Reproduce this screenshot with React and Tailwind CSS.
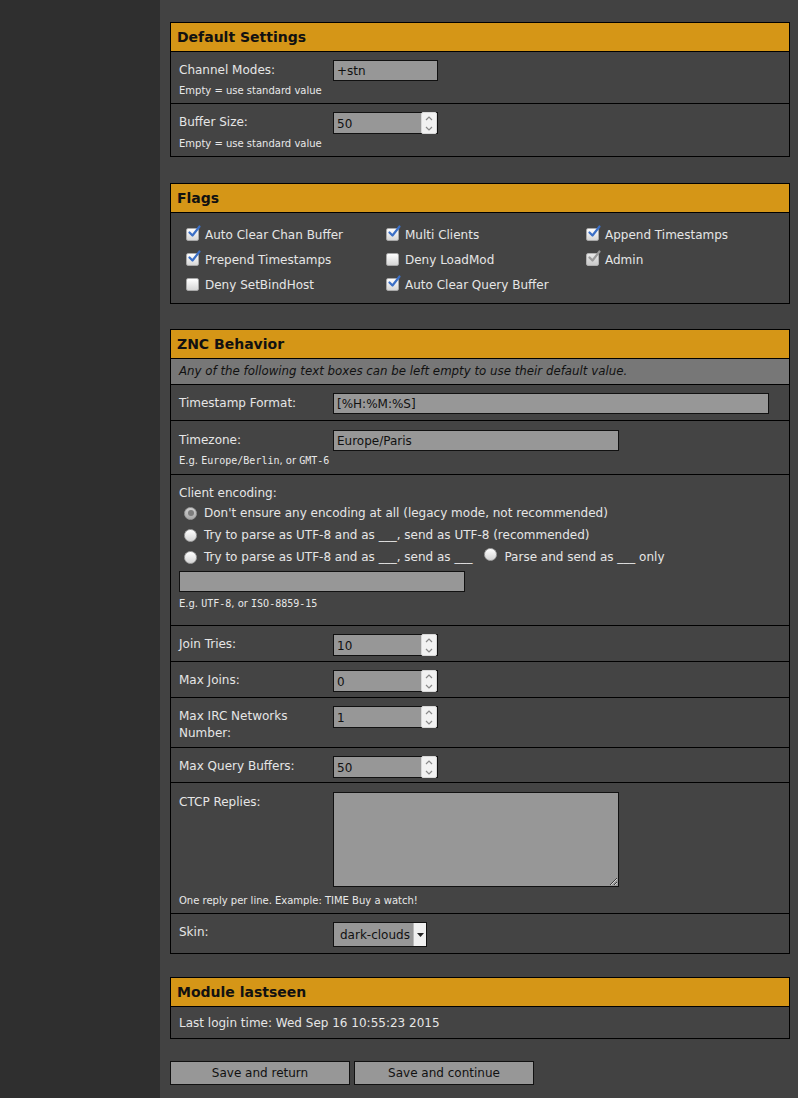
import React from 'react';

const font = { fontFamily: '"DejaVu Sans", Verdana, sans-serif' };

const Check = ({ checked, disabled }) => (
  <span className="relative inline-block w-[13px] h-[13px] shrink-0">
    <span
      className={
        'absolute inset-0 rounded-[2px] border ' +
        (disabled
          ? 'border-[#b0b0b0] bg-gradient-to-b from-[#e8e8e8] to-[#c9c9c9]'
          : 'border-[#a8a8a8] bg-gradient-to-b from-[#ffffff] to-[#d6d6d6]')
      }
    />
    {checked && (
      <svg className="absolute left-[1px] top-[-3px]" width="14" height="14" viewBox="0 0 14 14">
        <path
          d="M2.5 7.5 L5.5 10.5 L12.5 1.5"
          fill="none"
          stroke={disabled ? '#9a9a9a' : '#3b6fc6'}
          strokeWidth="2.2"
          strokeLinecap="round"
          strokeLinejoin="round"
        />
      </svg>
    )}
  </span>
);

const Radio = ({ checked }) => (
  <span
    className={
      'relative inline-flex items-center justify-center w-[13px] h-[13px] rounded-full border shrink-0 ' +
      (checked
        ? 'border-[#9a9a9a] bg-gradient-to-b from-[#d0d0d0] to-[#a9a9a9]'
        : 'border-[#a8a8a8] bg-gradient-to-b from-[#ffffff] to-[#d4d4d4]')
    }
  >
    {checked && <span className="w-[6px] h-[6px] rounded-full bg-[#7d7d7d]" />}
  </span>
);

const TextInput = ({ value = '', w }) => (
  <div className={`h-[21px] ${w} bg-[#979797] border border-[#111] flex items-center px-[3px] text-[12px] text-[#111]`}>
    {value}
  </div>
);

const NumInput = ({ value }) => (
  <div className="h-[22px] w-[105px] bg-[#979797] border border-[#111] flex items-stretch text-[12px] text-[#111]">
    <div className="flex-1 flex items-center px-[3px] pt-[2px]">{value}</div>
    <div className="w-[16px] my-[-1px] flex flex-col bg-[#f2f2f2] border border-[#d8d8d8] rounded-[2px]">
      <div className="flex-1 flex items-center justify-center">
        <svg width="8" height="5" viewBox="0 0 8 5"><path d="M1 4 L4 1 L7 4" fill="none" stroke="#8a8a8a" strokeWidth="1.2" /></svg>
      </div>
      <div className="flex-1 flex items-center justify-center">
        <svg width="8" height="5" viewBox="0 0 8 5"><path d="M1 1 L4 4 L7 1" fill="none" stroke="#8a8a8a" strokeWidth="1.2" /></svg>
      </div>
    </div>
  </div>
);

const Hint = ({ children }) => (
  <div className="text-[10px] leading-[14px] text-[#e8e8e8]">{children}</div>
);

const Code = ({ children }) => (
  <span className="text-[10px]" style={{ fontFamily: '"DejaVu Sans Mono", monospace' }}>{children}</span>
);

// one form line: label column + control, optional hint underneath
const Row = ({ label, children, hint, hintGap = 'mt-[3px]', pad = 'pt-[8px] pb-[5px]' }) => (
  <div className={`px-[8px] ${pad}`}>
    <div className="flex items-start">
      <div className="w-[154px] pr-[10px] leading-[17px] pt-[2px]">{label}</div>
      <div>{children}</div>
    </div>
    {hint && <div className={hintGap}><Hint>{hint}</Hint></div>}
  </div>
);

const Panel = ({ title, children, className = '' }) => (
  <div className={`w-[620px] border border-black bg-[#444444] ${className}`}>
    <div className="h-[29px] bg-[#d59617] border-b border-black px-[6px] pt-[1px] flex items-center text-[14px] font-bold text-[#111]">
      {title}
    </div>
    <div className="divide-y divide-black">{children}</div>
  </div>
);

const flags = [
  ['Auto Clear Chan Buffer', true],
  ['Multi Clients', true],
  ['Append Timestamps', true],
  ['Prepend Timestamps', true],
  ['Deny LoadMod', false],
  ['Admin', true, true],
  ['Deny SetBindHost', false],
  ['Auto Clear Query Buffer', true],
];

export default function App() {
  return (
    <div className="min-h-screen flex bg-[#424242] text-[12px] text-[#e6e6e6]" style={font}>
      <div className="w-[160px] shrink-0 bg-[#2f2f2f]" />
      <div className="flex-1 pl-[10px] pt-[22px] pb-[14px]">
        <Panel title="Default Settings">
          <Row label="Channel Modes:" hint="Empty = use standard value">
            <TextInput value="+stn" w="w-[105px]" />
          </Row>
          <Row label="Buffer Size:" hint="Empty = use standard value">
            <NumInput value="50" />
          </Row>
        </Panel>

        <Panel title="Flags" className="mt-[26px]">
          <div className="grid grid-cols-[200px_200px_200px] pl-[15px] pt-[9px] pb-[6px]">
            {flags.map(([name, checked, disabled]) => (
              <div key={name} className="h-[25px] flex items-center gap-[6px]">
                <Check checked={checked} disabled={disabled} />
                <span>{name}</span>
              </div>
            ))}
          </div>
        </Panel>

        <Panel title="ZNC Behavior" className="mt-[25px]">
          <div className="bg-[#777777] px-[8px] h-[26px] flex items-center italic text-[11.8px] text-[#111]">
            Any of the following text boxes can be left empty to use their default value.
          </div>
          <Row label="Timestamp Format:" pad="pt-[8px] pb-[6px]">
            <TextInput value="[%H:%M:%S]" w="w-[436px]" />
          </Row>
          <Row
            label="Timezone:"
            pad="pt-[9px] pb-[6px]"
            hint={<>E.g. <Code>Europe/Berlin</Code>, or <Code>GMT-6</Code></>}
          >
            <TextInput value="Europe/Paris" w="w-[286px]" />
          </Row>
          <div className="px-[8px] pt-[9px] pb-[14px]">
            <div className="leading-[18px]">Client encoding:</div>
            <div className="pl-[5px]">
              <div className="h-[22px] flex items-center gap-[7px]">
                <Radio checked />
                <span>Don't ensure any encoding at all (legacy mode, not recommended)</span>
              </div>
              <div className="h-[22px] flex items-center gap-[7px]">
                <Radio />
                <span>Try to parse as UTF-8 and as ___, send as UTF-8 (recommended)</span>
              </div>
              <div className="h-[22px] flex items-center gap-[7px]">
                <Radio />
                <span>Try to parse as UTF-8 and as ___, send as ___</span>
                <span className="ml-[5px]"><Radio /></span>
                <span>Parse and send as ___ only</span>
              </div>
            </div>
            <div className="mt-[3px]">
              <TextInput w="w-[286px]" />
            </div>
            <div className="mt-[5px]">
              <Hint>E.g. <Code>UTF-8</Code>, or <Code>ISO-8859-15</Code></Hint>
            </div>
          </div>
          <Row label="Join Tries:"><NumInput value="10" /></Row>
          <Row label="Max Joins:"><NumInput value="0" /></Row>
          <Row label="Max IRC Networks Number:"><NumInput value="1" /></Row>
          <Row label="Max Query Buffers:" pad="pt-[8px] pb-[4px]"><NumInput value="50" /></Row>
          <Row
            label="CTCP Replies:"
            pad="pt-[9px] pb-[5px]"
            hint="One reply per line. Example: TIME Buy a watch!"
            hintGap="mt-[7px]"
          >
            <textarea
              className="block w-[286px] h-[95px] bg-[#979797] border border-[#111] outline-none text-[12px] text-[#111]"
              defaultValue=""
            />
          </Row>
          <div className="px-[8px] pt-[8px] pb-[6px] flex items-start">
            <div className="w-[154px] pt-[2px] leading-[17px]">Skin:</div>
            <div className="h-[25px] w-[94px] bg-[#979797] border border-[#111] flex items-stretch text-[12px] text-[#111]">
              <div className="flex-1 flex items-center pl-[6px]">dark-clouds</div>
              <div className="w-[13px] bg-[#f0f0f0] border-l border-[#bbb] flex items-center justify-center">
                <svg width="7" height="4" viewBox="0 0 7 4"><path d="M0 0 L7 0 L3.5 4 Z" fill="#222" /></svg>
              </div>
            </div>
          </div>
        </Panel>

        <Panel title="Module lastseen" className="mt-[23px]">
          <div className="h-[31px] px-[8px] flex items-center">Last login time: Wed Sep 16 10:55:23 2015</div>
        </Panel>

        <div className="mt-[22px] flex gap-[4px]">
          <button className="w-[180px] h-[24px] bg-[#979797] border border-[#111] text-[12px] text-[#111]">Save and return</button>
          <button className="w-[180px] h-[24px] bg-[#979797] border border-[#111] text-[12px] text-[#111]">Save and continue</button>
        </div>
      </div>
    </div>
  );
}
